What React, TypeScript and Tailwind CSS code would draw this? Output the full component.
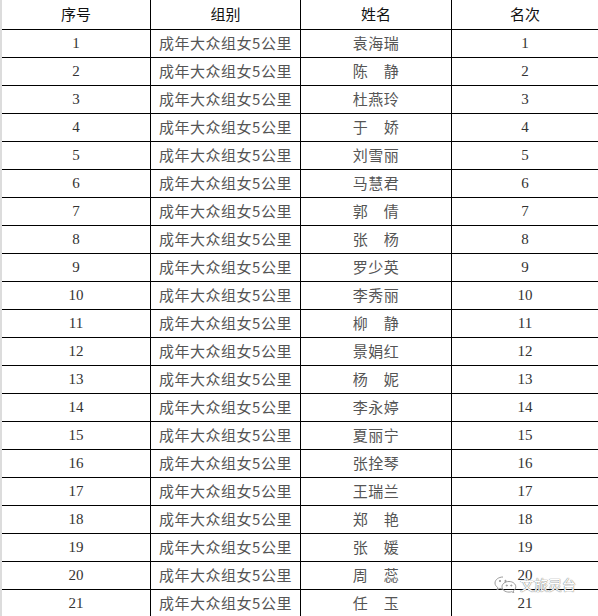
import React from "react";

const NAMES = [
  "袁海瑞", "陈　静", "杜燕玲", "于　娇", "刘雪丽", "马慧君", "郭　倩",
  "张　杨", "罗少英", "李秀丽", "柳　静", "景娟红", "杨　妮", "李永婷",
  "夏丽宁", "张拴琴", "王瑞兰", "郑　艳", "张　媛", "周　蕊", "任　玉",
];

const GROUP = "成年大众组女5公里";

const CJK = "font-['Noto_Sans_CJK_SC',sans-serif]";
const NUM = "font-['Liberation_Serif','Noto_Sans_CJK_SC',serif]";

function WeChatIcon() {
  return (
    <svg width="24" height="18" viewBox="0 0 24 18" fill="none" stroke="#9a9a9a" strokeWidth="1">
      <path d="M9 2c-4.4 0-8 2.7-8 6 0 1.8 1 3.4 2.7 4.5l-.7 2.2 2.6-1.3c1 .3 2.2.5 3.4.5" />
      <path d="M15 6.5c-4 0-7 2.4-7 5.3s3 5.3 7 5.3c.9 0 1.8-.1 2.6-.4l2.2 1.1-.6-1.8c1.6-1 2.6-2.5 2.6-4.2 0-2.9-3-5.3-6.8-5.3z" />
      <circle cx="6" cy="6" r=".7" fill="#9a9a9a" />
      <circle cx="11.5" cy="6" r=".7" fill="#9a9a9a" />
      <circle cx="12.8" cy="10.5" r=".6" fill="#9a9a9a" />
      <circle cx="17.3" cy="10.5" r=".6" fill="#9a9a9a" />
    </svg>
  );
}

export default function App() {
  return (
    <div className="relative h-[616px] w-[598px] overflow-hidden bg-white">
      <div className="grid grid-cols-[149px_150px_151px_1fr] border-l-2 border-[#dcdcdc]">
        {/* header */}
        {["序号", "组别", "姓名", "名次"].map((h, i) => (
          <div
            key={h}
            className={`flex h-[30px] items-center justify-center border-b border-black text-[15px] text-[#111] ${CJK} ${i < 3 ? "border-r" : ""}`}
          >
            {h}
          </div>
        ))}

        {/* rows */}
        {NAMES.map((name, idx) => (
          <React.Fragment key={idx}>
            <div className={`flex h-[28px] items-center justify-center border-r border-b border-black text-[15px] text-[#333] ${NUM}`}>
              {idx + 1}
            </div>
            <div className={`flex h-[28px] items-center justify-center border-r border-b border-black text-[15px] tracking-[0.5px] text-[#555] ${CJK}`}>
              {GROUP}
            </div>
            <div className={`flex h-[28px] items-center justify-center border-r border-b border-black text-[15px] tracking-[0.5px] text-[#555] ${CJK}`}>
              {name}
            </div>
            <div className={`flex h-[28px] items-center justify-center border-b border-black text-[15px] text-[#333] ${NUM}`}>
              {idx + 1}
            </div>
          </React.Fragment>
        ))}
      </div>

      {/* watermark */}
      <div className="absolute left-[494px] top-[575px] flex items-center gap-[2px]">
        <WeChatIcon />
        <span className={`text-[14px] leading-none text-white [text-shadow:0_0_1px_#777,0_0_1px_#777] ${CJK}`}>
          文旅灵台
        </span>
      </div>
    </div>
  );
}
